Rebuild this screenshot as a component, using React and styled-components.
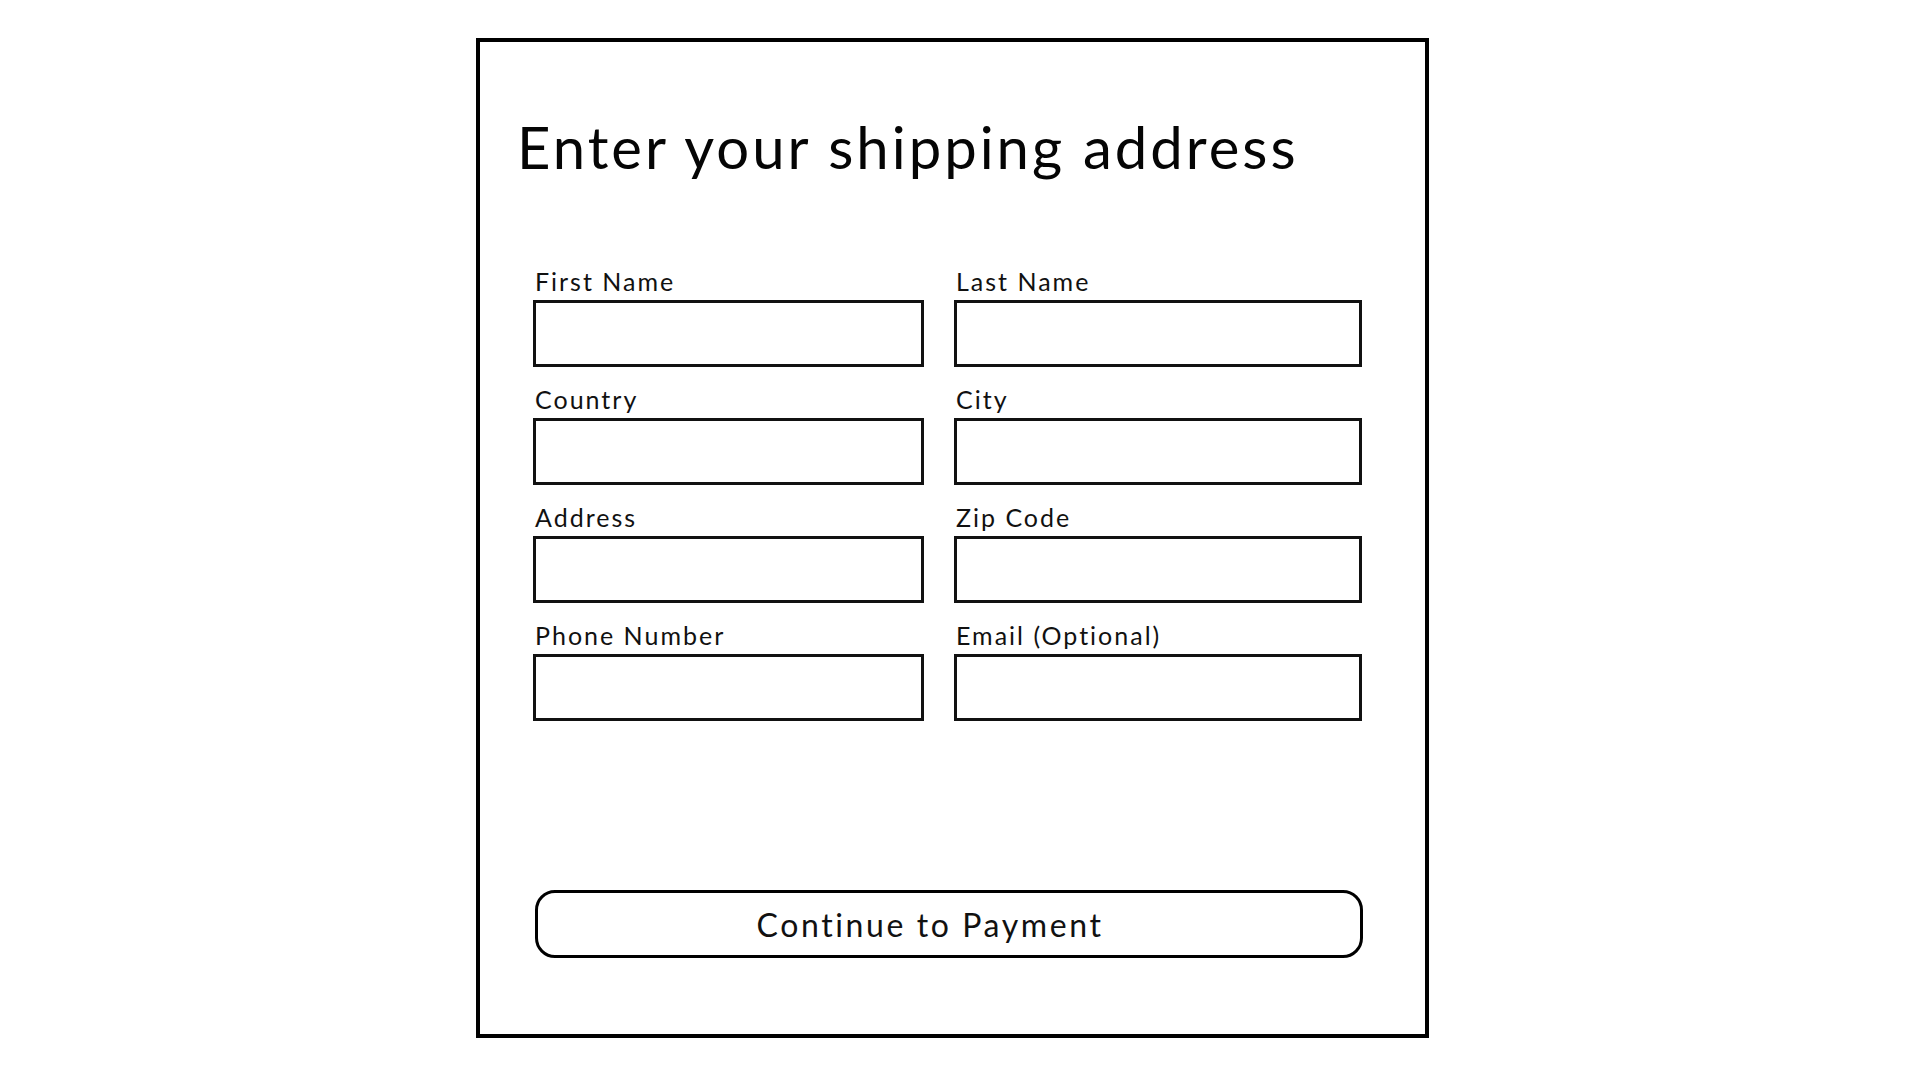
import React from 'react';
import styled, { createGlobalStyle } from 'styled-components';

const GlobalStyle = createGlobalStyle`
  html, body {
    margin: 0;
    padding: 0;
    background: #ffffff;
  }
  body {
    font-family: Lato, "Open Sans", sans-serif;
    color: #000;
  }
`;

const fields = [
  { label: 'First Name', name: 'firstName' },
  { label: 'Last Name', name: 'lastName' },
  { label: 'Country', name: 'country' },
  { label: 'City', name: 'city' },
  { label: 'Address', name: 'address' },
  { label: 'Zip Code', name: 'zip' },
  { label: 'Phone Number', name: 'phone' },
  { label: 'Email (Optional)', name: 'email' },
];

function App() {
  return (
    <>
      <GlobalStyle />
      <Page>
        <Frame>
          <Title>Enter your shipping address</Title>
          <FieldGrid>
            {fields.map((f) => (
              <Field key={f.name}>
                <Label htmlFor={f.name}>{f.label}</Label>
                <Input id={f.name} type="text" />
              </Field>
            ))}
          </FieldGrid>
          <SubmitButton type="button">Continue to Payment</SubmitButton>
        </Frame>
      </Page>
    </>
  );
}

const Page = styled.div`
  width: 1920px;
  height: 1080px;
  padding: 38px 0 0 476px;
  box-sizing: border-box;
`;

const Frame = styled.div`
  width: 953px;
  height: 1000px;
  box-sizing: border-box;
  border: 4px solid #000;
  display: flex;
  flex-direction: column;
  padding: 76px 0 0 0;
`;

const Title = styled.h1`
  margin: 0 0 0 37px;
  font-size: 58px;
  line-height: 58px;
  font-weight: 400;
  letter-spacing: 3px;
  color: #050505;
`;

const FieldGrid = styled.div`
  display: grid;
  grid-template-columns: 391px 408px;
  column-gap: 30px;
  row-gap: 20px;
  margin: 93px 0 0 53px;
`;

const Field = styled.div`
  display: flex;
  flex-direction: column;
  gap: 7px;
`;

const Label = styled.label`
  font-size: 25px;
  line-height: 24px;
  letter-spacing: 2px;
  padding-left: 2px;
  color: #111;
`;

const Input = styled.input`
  height: 67px;
  box-sizing: border-box;
  border: 3px solid #111;
  border-radius: 0;
  background: #fff;
  outline: none;
  font-family: inherit;
  font-size: 22px;
  padding: 0 12px;
`;

const SubmitButton = styled.button`
  margin: 169px 0 0 55px;
  width: 828px;
  height: 68px;
  box-sizing: border-box;
  border: 3px solid #000;
  border-radius: 20px;
  background: #fff;
  font-family: inherit;
  font-size: 32px;
  letter-spacing: 2.6px;
  color: #111;
  padding: 0 38px 0 0;
  cursor: pointer;
`;

export default App;
